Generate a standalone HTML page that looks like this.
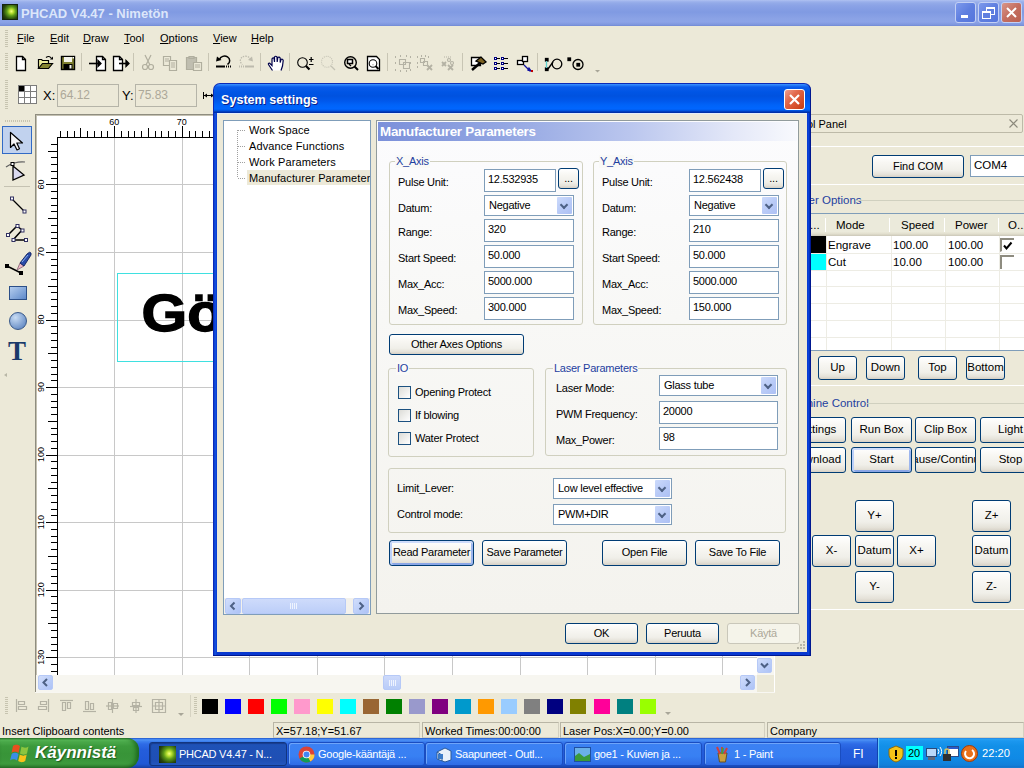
<!DOCTYPE html>
<html><head><meta charset="utf-8">
<style>
*{box-sizing:border-box;margin:0;padding:0}
html,body{width:1024px;height:768px;overflow:hidden;background:#ECE9D8;font-family:"Liberation Sans",sans-serif;font-size:11px;color:#000;position:relative}
.a{position:absolute}
svg{position:absolute;overflow:visible}
.t{position:absolute;white-space:nowrap;line-height:13px}
.tbtn{position:absolute;top:2px;width:21px;height:21px;border:1px solid #C3D0F4;border-radius:3px;background:linear-gradient(135deg,#7D99EC,#5F7FE0 50%,#5575DC)}
.tbtn.close{background:linear-gradient(135deg,#D9968A,#C46E60 50%,#BA6050)}
.btn{position:absolute;border:1px solid #003C74;border-radius:3px;background:linear-gradient(#FFFFFF 0,#F8F7F3 30%,#F0EFE9 70%,#E5E2D9 88%,#D6D0C5 100%);text-align:center;font-size:11px;white-space:nowrap;overflow:hidden}
.btn span{position:absolute;left:0;right:0;top:50%;margin-top:-7px;line-height:13px}
.btn.def{box-shadow:inset 0 2px 0 0 #CEDCFB,inset 2px 0 0 0 #BCD0F8,inset -2px 0 0 0 #9DB6EE,inset 0 -2px 0 0 #8AA6E6}
.btn.dis{border-color:#C9C7BA;color:#ACA899;background:#F5F4EA}
.inp{position:absolute;border:1px solid #7F9DB9;background:#fff;font-size:11px;line-height:13px;white-space:nowrap;overflow:hidden}
.inp span{position:absolute;left:3px;top:3px}
.grp{position:absolute;border:1px solid #D0D0BF;border-radius:3px}
.glab{position:absolute;padding:0 1px;color:#1F3F9F;line-height:13px;white-space:nowrap}
.combo{position:absolute;border:1px solid #7F9DB9;background:#fff;font-size:11px;line-height:13px;white-space:nowrap}
.combo span{position:absolute;left:4px;top:3px}
.dd{position:absolute;right:1px;top:1px;bottom:1px;width:15px;border-radius:1px;background:linear-gradient(135deg,#CCDAFB,#B9CBF7 50%,#ADC0F4)}
.dd:after{content:"";position:absolute;left:3.5px;top:4.5px;width:4px;height:4px;border-right:2.5px solid #4D6185;border-bottom:2.5px solid #4D6185;transform:rotate(45deg)}
.chk{position:absolute;width:13px;height:13px;border:1px solid #1C5180;background:linear-gradient(135deg,#DCDCD7,#FFFFFF)}
.grip{position:absolute;width:3px;background:repeating-linear-gradient(#C7C4B0 0 1px,transparent 1px 2px)}
.sep{position:absolute;width:1px;background:#C8C5B4}
.sw{position:absolute;top:699px;width:16px;height:15px}
.sb{position:absolute;border:1px solid #D3D0C0;border-top-color:#B8B5A5;border-left-color:#B8B5A5;height:16px;top:722px}
.sb span{position:absolute;left:2px;top:2px}
.tb{position:absolute;top:742px;height:24px;border-radius:3px;color:#fff;font-size:11px;background:linear-gradient(#3C81F3 0,#3880F3 60%,#2F6CE6 100%);border:1px solid #1A4DC0;box-shadow:inset 1px 1px 0 #6EA5FA}
.tb span{position:absolute;left:29px;top:5px;line-height:13px;letter-spacing:-0.25px}
.tb.act{background:linear-gradient(#1E52B7,#1F4FB4 80%,#2456BE);box-shadow:inset 1px 1px 1px #173C8E;border-color:#12357F}
</style></head><body>

<!-- main title bar -->
<div class="a" style="left:0;top:0;width:1024px;height:26px;background:linear-gradient(#B1C3F1 0,#A2B6EE 1px,#93AAE8 3px,#8AA2E6 6px,#809AE2 12px,#8BA3E6 19px,#8CA3E7 22px,#7D95DD 25px,#6F87D2 26px)"></div>
<div class="a" style="left:2px;top:4px;width:16px;height:16px;background:#14240C"><div class="a" style="left:1px;top:1px;width:14px;height:14px;background:radial-gradient(circle at 60% 45%,#F4FF80 0,#B8E030 18%,#5C9A18 40%,#28480C 70%,#142008 100%)"></div></div>
<div class="t" style="left:21px;top:6px;font-weight:bold;font-size:13px;line-height:15px;color:#DCE6FA">PHCAD V4.47 - Nimetön</div>
<div class="tbtn" style="left:955px"><div class="a" style="left:5px;top:12px;width:7px;height:3px;background:#fff"></div></div>
<div class="tbtn" style="left:978px"><div class="a" style="left:7px;top:4px;width:9px;height:8px;border:1px solid #fff;border-top-width:2px"></div><div class="a" style="left:3px;top:8px;width:9px;height:8px;border:1px solid #fff;border-top-width:2px;background:#5F7FE0"></div></div>
<div class="tbtn close" style="left:1001px"><svg width="21" height="21" style="left:-1px;top:-1px"><path d="M6 6L15 15M15 6L6 15" stroke="#fff" stroke-width="2"/></svg></div>

<!-- menu bar -->
<div class="grip" style="left:5px;top:30px;height:17px"></div>
<div class="t" style="left:17px;top:32px;font-size:11px"><u>F</u>ile</div>
<div class="t" style="left:50px;top:32px;font-size:11px"><u>E</u>dit</div>
<div class="t" style="left:83px;top:32px;font-size:11px"><u>D</u>raw</div>
<div class="t" style="left:124px;top:32px;font-size:11px"><u>T</u>ool</div>
<div class="t" style="left:160px;top:32px;font-size:11px"><u>O</u>ptions</div>
<div class="t" style="left:213px;top:32px;font-size:11px"><u>V</u>iew</div>
<div class="t" style="left:251px;top:32px;font-size:11px"><u>H</u>elp</div>


<!-- toolbar 1 -->
<div class="grip" style="left:5px;top:53px;height:18px"></div>
<svg width="600" height="20" style="left:0;top:53px">
 <g fill="none" stroke="#000" stroke-width="1.3">
  <!-- new -->
  <path d="M16.5 3.5h6l3 3v11h-9z" fill="#fff"/><path d="M22.5 3.5v3h3"/>
  <!-- open -->
  <path d="M38.5 15.5V6.5h3l1 1h6v3" fill="#EEEE9A" stroke="#000" stroke-width="1.2"/><path d="M38.5 15.5l4-5h10l-4 5z" fill="#858530" stroke="#000" stroke-width="1.2"/><path d="M46 4.5c2-1.5 4-1.5 5.5 1" stroke-width="1.2"/><path d="M50 6.5h3v-3z" fill="#000" stroke="none"/>
  <!-- save -->
  <rect x="61.5" y="3.5" width="13" height="13" fill="#7F8030" stroke-width="1.4"/><rect x="64" y="4" width="8" height="5" fill="#F4F4EC" stroke="none"/><rect x="63.5" y="11" width="9" height="5.5" fill="#000" stroke="none"/><rect x="69.5" y="12" width="2" height="3.5" fill="#F4F4EC" stroke="none"/><rect x="72.5" y="4" width="1.5" height="1.5" fill="#fff" stroke="none"/>
  <!-- import -->
  <path d="M96.5 3.5h6l3 3v11h-9z" fill="#fff"/><path d="M102.5 3.5v3h3"/><path d="M89 10.5h10" stroke-width="1.6"/><path d="M98 7.5l3 3-3 3z" fill="#000"/>
  <!-- export -->
  <path d="M113.5 3.5h6l3 3v11h-9z" fill="#fff"/><path d="M119.5 3.5v3h3"/><path d="M119 10.5h8" stroke-width="1.6"/><path d="M126 7.5l3 3-3 3z" fill="#000"/>
 </g>
 <g fill="none" stroke="#B0AE9E" stroke-width="1.2">
  <!-- scissors -->
  <path d="M145 2l5 10M151 2l-5 10"/><circle cx="145" cy="14" r="2.5"/><circle cx="151" cy="14" r="2.5"/>
  <!-- copy -->
  <path d="M163.5 3.5h7v9h-7z"/><path d="M169.5 7.5h7v10h-7z" fill="#ECE9D8"/><path d="M165 6h4M165 8h4M171 10h4M171 12h4M171 14h4"/>
  <!-- paste -->
  <path d="M186.5 4.5h10v12h-10z" fill="#C0BEB0"/><path d="M189 3.5h5v2h-5z" fill="#C0BEB0"/><path d="M193.5 9.5h8v8h-8z" fill="#ECE9D8"/><path d="M195 12h5M195 14h5"/>
 </g>
 <!-- undo -->
 <g fill="none" stroke="#000" stroke-width="1.5"><path d="M219.5 6.5A5.2 4.6 0 1 1 227.5 11.5"/></g>
 <path d="M216 8.5L217 3.5L221.5 7z" fill="#000"/><rect x="216" y="12.5" width="9" height="2" fill="#000"/><rect x="226" y="12.5" width="1" height="2" fill="#000"/><rect x="228" y="12.5" width="1" height="2" fill="#000"/><rect x="230" y="12.5" width="1" height="2" fill="#000"/>
 <!-- redo -->
 <g fill="none" stroke="#BDBBAE" stroke-width="1.2"><path d="M250.5 6.5A5.2 4.6 0 1 0 242.5 11.5" stroke-dasharray="1.5 1"/></g>
 <path d="M253 8.5L252 3.5L248 7z" fill="#BDBBAE"/><rect x="245" y="12.5" width="9" height="2" fill="#BDBBAE"/><rect x="239" y="12.5" width="1" height="2" fill="#BDBBAE"/><rect x="241" y="12.5" width="1" height="2" fill="#BDBBAE"/><rect x="243" y="12.5" width="1" height="2" fill="#BDBBAE"/>
 <!-- hand -->
 <path d="M272.5 17.5L268.5 11.5Q268 10 269.5 10L272 12.5L272 6Q272.5 4.5 274 5L274.5 9L274.5 4Q275.5 2.5 277 4L277.2 9L277.8 4.5Q279 3.5 280.2 5L280.2 9.5L281 6.5Q282.5 5.5 283.2 7.5L282.5 13L281 17.5" fill="#fff" stroke="#00004A" stroke-width="1.2"/>
 <!-- zoom +- -->
 <g fill="none" stroke="#000" stroke-width="1.1"><circle cx="302.5" cy="9.5" r="4.8"/><path d="M306 13l3.5 3.5" stroke-width="2.2"/><path d="M309 6.5h4.5M311.2 4v5M309 11.5h4.5" stroke-width="1.2"/></g>
 <g fill="none" stroke="#C4C2B4" stroke-width="1.1" stroke-dasharray="1 1"><circle cx="327" cy="8.8" r="5.5"/></g><path d="M331 13l4 4" stroke="#C4C2B4" stroke-width="1.3"/>
 <g fill="none" stroke="#000"><circle cx="350.5" cy="9.5" r="5.8" stroke-width="1.4"/><rect x="347.5" y="6.5" width="5" height="4" fill="#fff" stroke-width="1.5"/><path d="M349 11l2 2" stroke-width="1.2"/><path d="M354.5 13.5l3.5 3.5" stroke-width="2"/></g>
 <g fill="none" stroke="#000" stroke-width="1.3"><path d="M367.5 3.5h9l3 3v11h-12z" fill="#fff"/><circle cx="373" cy="10.5" r="3.8" stroke-width="1.1"/><path d="M375.5 13l3 3" stroke-width="2"/><path d="M372 11.5h2l-1 1z" fill="#808080" stroke="none"/></g>
 <!-- group gray -->
 <g fill="none" stroke="#B4B2A4" stroke-width="1.1"><path d="M399.5 6.5h6v5h-6zM403.5 9.5h6v6h-6z"/><path d="M395 4h1M400 3h1M406 3h1M410 4h1M395 10h1M410 10h1M395 17h1M400 18h1M406 18h1M410 17h1" stroke-width="2"/></g>
 <g fill="none" stroke="#B4B2A4" stroke-width="1.1"><path d="M420.5 5.5h4v4h-4zM423.5 8.5h4v4h-4z"/><path d="M417 4h1M421 3h1M425 3h1M428 4h1M417 10h1M417 14h1" stroke-width="2"/><path d="M427 12l5 5M432 12l-5 5" stroke-width="1.8"/></g>
 <g fill="none" stroke="#B4B2A4" stroke-width="1.1"><circle cx="449" cy="7" r="1.5"/><circle cx="452" cy="10" r="1.5"/><path d="M442 9l4 4M446 9l-4 4M448 12l5 5M453 12l-5 5" stroke-width="1.8"/><path d="M444 4h8" stroke-dasharray="1 1"/></g>
 <!-- hammer -->
 <g stroke="#000" stroke-width="1.3"><path d="M471.5 4.5h9v8h-9z" fill="#fff"/><path d="M476 8l5-4 5 5-3 2z" fill="#7A6020"/><path d="M480 10l-8 7" stroke-width="2.5"/></g>
 <!-- array -->
 <g fill="#fff" stroke="#000080" stroke-width="1"><rect x="494.5" y="4.5" width="2" height="2"/><rect x="501.5" y="4.5" width="2" height="2"/><rect x="494.5" y="9.5" width="2" height="2"/><rect x="501.5" y="9.5" width="2" height="2"/><rect x="494.5" y="14.5" width="2" height="2"/><rect x="501.5" y="14.5" width="2" height="2"/></g>
 <path d="M497 5.5h3M504 5.5h4M497 10.5h3M504 10.5h4M497 15.5h3M504 15.5h4" stroke="#000" stroke-width="1"/>
 <!-- move -->
 <g stroke="#000" stroke-width="1.3" fill="#fff"><rect x="517.5" y="7.5" width="6" height="4"/><rect x="522.5" y="3.5" width="5" height="5"/><path d="M524 12l6 6" stroke="#1010A0" fill="none"/><path d="M529 15l2 3-3-1z" fill="#1010A0" stroke="#1010A0"/></g>
 <rect x="531" y="17" width="2" height="2" fill="#C00000"/>
 <!-- line circle -->
 <g fill="none" stroke="#000" stroke-width="1.3"><rect x="545.5" y="5.5" width="2.5" height="2.5" fill="#000"/><rect x="545.5" y="15" width="2.5" height="2.5" fill="#000"/><path d="M546.5 8v7" stroke="#60D0D0"/><circle cx="557" cy="11" r="4.8"/><path d="M548 16l5-7"/></g>
 <g fill="none" stroke="#000" stroke-width="1.3"><rect x="568" y="5" width="2.5" height="2.5" fill="#000"/><circle cx="578" cy="11.5" r="5"/><rect x="577" y="10.5" width="2.5" height="2.5" fill="#000"/></g>
 <path d="M595 17h5l-2.5 2.5z" fill="#A8A698"/>
</svg>
<div class="sep" style="left:81px;top:53px;height:18px"></div>
<div class="sep" style="left:133px;top:53px;height:18px"></div>
<div class="sep" style="left:208px;top:53px;height:18px"></div>
<div class="sep" style="left:260px;top:53px;height:18px"></div>
<div class="sep" style="left:289px;top:53px;height:18px"></div>
<div class="sep" style="left:387px;top:53px;height:18px"></div>
<div class="sep" style="left:462px;top:53px;height:18px"></div>
<div class="sep" style="left:537px;top:53px;height:18px"></div>

<!-- toolbar 2 -->
<div class="grip" style="left:5px;top:80px;height:30px"></div>
<svg width="20" height="20" style="left:18px;top:85px"><rect x="0.5" y="0.5" width="18" height="18" fill="#fff" stroke="#7C7C7C"/><path d="M6.5 0v19M12.5 0v19M0 6.5h19M0 12.5h19" stroke="#7C7C7C"/><rect x="1" y="1" width="5" height="5" fill="#000"/></svg>
<div class="t" style="left:43px;top:89px;font-size:13px;line-height:13px">X:</div>
<div class="inp" style="left:57px;top:84px;width:62px;height:23px;background:#ECE9D8;border-color:#B5B4A8"><span style="color:#ACA899;font-size:12px;left:2px;top:4px;line-height:13px">64.12</span></div>
<div class="t" style="left:122px;top:89px;font-size:13px;line-height:13px">Y:</div>
<div class="inp" style="left:135px;top:84px;width:62px;height:23px;background:#ECE9D8;border-color:#B5B4A8"><span style="color:#ACA899;font-size:12px;left:2px;top:4px;line-height:13px">75.83</span></div>
<svg width="12" height="8" style="left:203px;top:92px"><path d="M0.5 0v7M11.5 0v7M1 3.5h10" stroke="#000"/><path d="M1 3.5l3-2v4zM11 3.5l-3-2v4z" fill="#000"/></svg>

<!-- left toolbox -->
<div class="a" style="left:5px;top:120px;width:25px;height:2px;background:repeating-linear-gradient(90deg,#C7C4B0 0 1px,transparent 1px 2px)"></div>
<div class="a" style="left:2px;top:126px;width:30px;height:28px;background:#C1D2EE;border:1px solid #316AC5"></div>
<svg width="34" height="260" style="left:0;top:115px">
 <!-- arrow -->
 <path d="M10.5 17.5V32.5L14 29L17 35L19.5 33.8L16.8 28H22.5z" fill="#F4F4F4" stroke="#000" stroke-width="1.2" stroke-linejoin="round"/>
 <!-- node edit -->
 <path d="M13 51l11 9-11 5z" fill="#DADAF0" stroke="#000" stroke-width="1.3"/><path d="M6 52c4-3 12-6 19-5" fill="none" stroke="#606060" stroke-width="1.2"/><rect x="11" y="47.5" width="3" height="3" fill="#fff" stroke="#000"/>
 <!-- sep -->
 <rect x="4" y="71" width="26" height="1" fill="#C5C2B2"/>
 <!-- line -->
 <path d="M12 84l12 12" stroke="#000" stroke-width="1.2"/><rect x="10.5" y="82" width="3" height="3" fill="#fff" stroke="#303060"/><rect x="23" y="95" width="3" height="3" fill="#fff" stroke="#303060"/>
 <!-- polyline -->
 <path d="M8 120l9-9 5 4-9 10h13" fill="none" stroke="#000" stroke-width="1.5"/><rect x="6.5" y="118.5" width="3" height="3" fill="#fff" stroke="#303060"/><rect x="16" y="109.5" width="3" height="3" fill="#fff" stroke="#303060"/><rect x="21" y="114" width="3" height="3" fill="#fff" stroke="#303060"/><rect x="12" y="123.5" width="3" height="3" fill="#fff" stroke="#303060"/><rect x="24.5" y="123.5" width="3" height="3" fill="#fff" stroke="#303060"/>
 <!-- pen -->
 <path d="M7 151L21 158" stroke="#000" stroke-width="1.5"/><rect x="5" y="149" width="4" height="4" fill="#000"/><rect x="19" y="156" width="4" height="4" fill="#000"/>
 <path d="M17 155L20 148L24 151z" fill="#F0B8C8" stroke="#806070" stroke-width="0.8"/><path d="M20 148L27 139Q30 136 31 138L31 140L24 151z" fill="#2A4CA8" stroke="#102060" stroke-width="0.9"/><path d="M22 147L28 140" stroke="#8AB0F0" stroke-width="1"/>
 <!-- rect -->
 <rect x="9.5" y="171.5" width="17" height="13" fill="#7DA2D8" stroke="#2C4F88"/>
 <!-- circle -->
 <defs><radialGradient id="cg" cx="0.35" cy="0.3" r="0.8"><stop offset="0" stop-color="#C8DCF4"/><stop offset="1" stop-color="#5C84C0"/></radialGradient><linearGradient id="rg" x1="0" y1="0" x2="1" y2="1"><stop offset="0" stop-color="#B8D0F0"/><stop offset="1" stop-color="#5A86C8"/></linearGradient></defs>
 <rect x="9.5" y="171.5" width="17" height="13" fill="url(#rg)" stroke="#2C4F88"/>
 <circle cx="18" cy="206" r="8.5" fill="url(#cg)" stroke="#3A5A8A"/>
 <!-- T -->
 <text x="8" y="245" font-family="Liberation Serif" font-weight="bold" font-size="27" fill="#1A3A6A">T</text>
 <path d="M4 260l3-2v4z" fill="#B8B6A6"/>
</svg>

<!-- canvas -->
<div class="a" style="left:35px;top:114px;width:740px;height:579px;background:#fff;border-top:1px solid #8F8D80;border-left:1px solid #8F8D80;box-shadow:inset 1px 1px 0 #C4C1B2"></div>
<svg width="1024" height="768" style="left:0;top:0"><path d="M114.5 138V675 M182.5 138V675 M249.5 138V675 M317.5 138V675 M384.5 138V675 M452.5 138V675 M520.5 138V675 M587.5 138V675 M655.5 138V675 M722.5 138V675 M58 184.5H757 M58 252.5H757 M58 320.5H757 M58 387.5H757 M58 455.5H757 M58 522.5H757 M58 590.5H757 M58 657.5H757" stroke="#C8C8C8" stroke-width="1" fill="none"/><path d="M57 137.5H757 M57.5 137V675 M60.5 131V137 M67.5 131V137 M74.5 131V137 M80.5 128V137 M87.5 131V137 M94.5 131V137 M101.5 131V137 M107.5 131V137 M114.5 126V137 M121.5 131V137 M128.5 131V137 M134.5 131V137 M141.5 131V137 M148.5 128V137 M155.5 131V137 M161.5 131V137 M168.5 131V137 M175.5 131V137 M182.5 126V137 M189.5 131V137 M195.5 131V137 M202.5 131V137 M209.5 131V137 M216.5 128V137 M222.5 131V137 M229.5 131V137 M236.5 131V137 M243.5 131V137 M249.5 126V137 M256.5 131V137 M263.5 131V137 M270.5 131V137 M276.5 131V137 M283.5 128V137 M290.5 131V137 M297.5 131V137 M303.5 131V137 M310.5 131V137 M317.5 126V137 M324.5 131V137 M330.5 131V137 M337.5 131V137 M344.5 131V137 M351.5 128V137 M357.5 131V137 M364.5 131V137 M371.5 131V137 M378.5 131V137 M384.5 126V137 M391.5 131V137 M398.5 131V137 M405.5 131V137 M411.5 131V137 M418.5 128V137 M425.5 131V137 M432.5 131V137 M438.5 131V137 M445.5 131V137 M452.5 126V137 M459.5 131V137 M465.5 131V137 M472.5 131V137 M479.5 131V137 M486.5 128V137 M492.5 131V137 M499.5 131V137 M506.5 131V137 M513.5 131V137 M520.5 126V137 M526.5 131V137 M533.5 131V137 M540.5 131V137 M547.5 131V137 M553.5 128V137 M560.5 131V137 M567.5 131V137 M574.5 131V137 M580.5 131V137 M587.5 126V137 M594.5 131V137 M601.5 131V137 M607.5 131V137 M614.5 131V137 M621.5 128V137 M628.5 131V137 M634.5 131V137 M641.5 131V137 M648.5 131V137 M655.5 126V137 M661.5 131V137 M668.5 131V137 M675.5 131V137 M682.5 131V137 M688.5 128V137 M695.5 131V137 M702.5 131V137 M709.5 131V137 M715.5 131V137 M722.5 126V137 M729.5 131V137 M736.5 131V137 M742.5 131V137 M749.5 131V137 M756.5 128V137 M51 144.5H57 M48 151.5H57 M51 157.5H57 M51 164.5H57 M51 171.5H57 M51 178.5H57 M46 184.5H57 M51 191.5H57 M51 198.5H57 M51 205.5H57 M51 211.5H57 M48 218.5H57 M51 225.5H57 M51 232.5H57 M51 238.5H57 M51 245.5H57 M46 252.5H57 M51 259.5H57 M51 265.5H57 M51 272.5H57 M51 279.5H57 M48 286.5H57 M51 292.5H57 M51 299.5H57 M51 306.5H57 M51 313.5H57 M46 320.5H57 M51 326.5H57 M51 333.5H57 M51 340.5H57 M51 347.5H57 M48 353.5H57 M51 360.5H57 M51 367.5H57 M51 374.5H57 M51 380.5H57 M46 387.5H57 M51 394.5H57 M51 401.5H57 M51 407.5H57 M51 414.5H57 M48 421.5H57 M51 428.5H57 M51 434.5H57 M51 441.5H57 M51 448.5H57 M46 455.5H57 M51 461.5H57 M51 468.5H57 M51 475.5H57 M51 482.5H57 M48 488.5H57 M51 495.5H57 M51 502.5H57 M51 509.5H57 M51 515.5H57 M46 522.5H57 M51 529.5H57 M51 536.5H57 M51 542.5H57 M51 549.5H57 M48 556.5H57 M51 563.5H57 M51 569.5H57 M51 576.5H57 M51 583.5H57 M46 590.5H57 M51 596.5H57 M51 603.5H57 M51 610.5H57 M51 617.5H57 M48 623.5H57 M51 630.5H57 M51 637.5H57 M51 644.5H57 M51 650.5H57 M46 657.5H57 M51 664.5H57 M51 671.5H57" stroke="#000" stroke-width="1" fill="none"/><g font-family="Liberation Sans" font-size="9" fill="#000"><text x="114.2" y="124.5" text-anchor="middle">60</text><text x="181.8" y="124.5" text-anchor="middle">70</text><text x="249.3" y="124.5" text-anchor="middle">80</text><text x="316.8" y="124.5" text-anchor="middle">90</text><text x="384.4" y="124.5" text-anchor="middle">100</text><text x="451.9" y="124.5" text-anchor="middle">110</text><text x="519.5" y="124.5" text-anchor="middle">120</text><text x="587.0" y="124.5" text-anchor="middle">130</text><text x="654.6" y="124.5" text-anchor="middle">140</text><text x="722.1" y="124.5" text-anchor="middle">150</text><text transform="translate(43.5,184.4) rotate(-90)" text-anchor="middle">60</text><text transform="translate(43.5,251.9) rotate(-90)" text-anchor="middle">70</text><text transform="translate(43.5,319.5) rotate(-90)" text-anchor="middle">80</text><text transform="translate(43.5,387.0) rotate(-90)" text-anchor="middle">90</text><text transform="translate(43.5,454.6) rotate(-90)" text-anchor="middle">100</text><text transform="translate(43.5,522.1) rotate(-90)" text-anchor="middle">110</text><text transform="translate(43.5,589.7) rotate(-90)" text-anchor="middle">120</text><text transform="translate(43.5,657.2) rotate(-90)" text-anchor="middle">130</text></g><rect x="117.5" y="273.5" width="640" height="88" fill="none" stroke="#3FE0E0" stroke-width="1"/><text transform="translate(141.5,330.5) scale(1.12,1)" font-family="Liberation Sans" font-weight="bold" font-size="52.5" fill="#000" stroke="#000" stroke-width="1.3">Gö</text></svg>
<div class="a" style="left:757px;top:116px;width:17px;height:559px;background:#F7F6F0"></div>
<div class="a" style="left:757px;top:658px;width:15px;height:15px;border-radius:2px;border:1px solid #B6C9F7;background:linear-gradient(135deg,#D2DEFB,#BACDF8 60%,#AEC3F6)"><svg width="13" height="13" style="left:0;top:0"><path d="M3 4.5l3.5 3.5 3.5-3.5" stroke="#4D6185" stroke-width="2" fill="none"/></svg></div>
<div class="a" style="left:36px;top:675px;width:721px;height:17px;background:#F7F6F0"></div>
<div class="a" style="left:38px;top:675px;width:15px;height:15px;border-radius:2px;border:1px solid #B6C9F7;background:linear-gradient(135deg,#D2DEFB,#BACDF8 60%,#AEC3F6)"><svg width="13" height="13" style="left:0;top:0"><path d="M8 3l-3.5 3.5 3.5 3.5" stroke="#4D6185" stroke-width="2" fill="none"/></svg></div>
<div class="a" style="left:383px;top:675px;width:18px;height:15px;border-radius:2px;border:1px solid #B6C9F7;background:linear-gradient(#CDDAFB,#B9CCF8)"><svg width="16" height="13" style="left:0;top:0"><path d="M5.5 4v6M7.5 4v6M9.5 4v6M11.5 4v6" stroke="#EEF3FE" stroke-width="1"/></svg></div>
<div class="a" style="left:740px;top:675px;width:15px;height:15px;border-radius:2px;border:1px solid #B6C9F7;background:linear-gradient(135deg,#D2DEFB,#BACDF8 60%,#AEC3F6)"><svg width="13" height="13" style="left:0;top:0"><path d="M5 3l3.5 3.5-3.5 3.5" stroke="#4D6185" stroke-width="2" fill="none"/></svg></div>
<div class="a" style="left:757px;top:675px;width:17px;height:17px;background:#ECE9D8"></div>

<!-- panel -->
<div class="a" style="left:780px;top:114px;width:243px;height:19px;border:1px solid #BDBAA8;border-radius:2px;background:#ECE9D8"></div>
<div class="t" style="left:780px;top:118px;font-size:11px">Control Panel</div>
<svg width="12" height="12" style="left:1008px;top:118px"><path d="M1.5 1.5l8 8M9.5 1.5l-8 8" stroke="#8C8A7C" stroke-width="1.1"/></svg>
<div class="a" style="left:780px;top:146px;width:244px;height:1px;background:#D6D3C2;border-bottom:1px solid #fff"></div>
<div class="btn" style="left:872px;top:155px;width:92px;height:23px"><span style="font-size:11px">Find COM</span></div>
<div class="inp" style="left:970px;top:155px;width:60px;height:22px"><span style="font-size:11.5px;top:3px">COM4</span></div>
<div class="a" style="left:780px;top:184px;width:244px;height:1px;background:#D6D3C2;border-bottom:1px solid #fff"></div>
<div class="glab" style="left:789px;top:194px;font-size:11.5px;background:#ECE9D8">Layer Options</div>
<div class="a" style="left:856px;top:200px;width:168px;height:1px;background:#D0D0BF"></div>
<div class="a" style="left:811px;top:213px;width:213px;height:138px;background:#fff;border-top:1px solid #7F9DB9;border-bottom:1px solid #7F9DB9"></div>
<div class="a" style="left:811px;top:214px;width:213px;height:22px;background:linear-gradient(#EBEADB 0,#EBEADB 80%,#E2DFCE 90%,#CBC7B8 100%)"></div>
<div class="a" style="left:825px;top:218px;width:1px;height:14px;background:#C7C5B2;border-right:1px solid #fff"></div>
<div class="a" style="left:889px;top:218px;width:1px;height:14px;background:#C7C5B2;border-right:1px solid #fff"></div>
<div class="a" style="left:944px;top:218px;width:1px;height:14px;background:#C7C5B2;border-right:1px solid #fff"></div>
<div class="a" style="left:998px;top:218px;width:1px;height:14px;background:#C7C5B2;border-right:1px solid #fff"></div>
<div class="t" style="left:810px;top:219px;font-size:11.5px">...</div>
<div class="t" style="left:836px;top:219px;font-size:11.5px">Mode</div>
<div class="t" style="left:901px;top:219px;font-size:11.5px">Speed</div>
<div class="t" style="left:955px;top:219px;font-size:11.5px">Power</div>
<div class="t" style="left:1008px;top:219px;font-size:11.5px">O...</div>
<div class="a" style="left:811px;top:253px;width:213px;height:1px;background:#EDECE4"></div>
<div class="a" style="left:811px;top:270px;width:213px;height:1px;background:#EDECE4"></div>
<div class="a" style="left:811px;top:286px;width:213px;height:1px;background:#EDECE4"></div>
<div class="a" style="left:811px;top:303px;width:213px;height:1px;background:#EDECE4"></div>
<div class="a" style="left:811px;top:320px;width:213px;height:1px;background:#EDECE4"></div>
<div class="a" style="left:811px;top:337px;width:213px;height:1px;background:#EDECE4"></div>
<div class="a" style="left:826px;top:236px;width:1px;height:114px;background:#EDECE4"></div>
<div class="a" style="left:891px;top:236px;width:1px;height:114px;background:#EDECE4"></div>
<div class="a" style="left:945px;top:236px;width:1px;height:114px;background:#EDECE4"></div>
<div class="a" style="left:999px;top:236px;width:1px;height:114px;background:#EDECE4"></div>
<div class="a" style="left:811px;top:236px;width:15px;height:17px;background:#000"></div>
<div class="a" style="left:811px;top:254px;width:15px;height:16px;background:#00FFFF"></div>
<div class="t" style="left:828px;top:239px;font-size:11.5px">Engrave</div>
<div class="t" style="left:893px;top:239px;font-size:11.5px">100.00</div>
<div class="t" style="left:948px;top:239px;font-size:11.5px">100.00</div>
<div class="t" style="left:828px;top:256px;font-size:11.5px">Cut</div>
<div class="t" style="left:893px;top:256px;font-size:11.5px">10.00</div>
<div class="t" style="left:948px;top:256px;font-size:11.5px">100.00</div>
<div class="a" style="left:1000px;top:238px;width:14px;height:14px;border-top:2px solid #8E8C80;border-left:2px solid #8E8C80;border-bottom:1px solid #fff"><svg width="12" height="12" style="left:0;top:0"><path d="M2 5.5l2.5 3 5-6" stroke="#000" stroke-width="2" fill="none"/></svg></div>
<div class="a" style="left:1000px;top:255px;width:14px;height:14px;border-top:2px solid #8E8C80;border-left:2px solid #8E8C80"></div>
<div class="btn" style="left:818px;top:356px;width:39px;height:24px"><span style="font-size:11.5px">Up</span></div>
<div class="btn" style="left:866px;top:356px;width:39px;height:24px"><span style="font-size:11.5px">Down</span></div>
<div class="btn" style="left:918px;top:356px;width:39px;height:24px"><span style="font-size:11.5px">Top</span></div>
<div class="btn" style="left:966px;top:356px;width:39px;height:24px"><span style="font-size:11.5px">Bottom</span></div>
<div class="a" style="left:811px;top:385px;width:213px;height:1px;background:#D6D3C2;border-bottom:1px solid #fff"></div>
<div class="glab" style="left:784px;top:397px;font-size:11.5px;background:#ECE9D8">Machine Control</div>
<div class="a" style="left:867px;top:403px;width:157px;height:1px;background:#D0D0BF"></div>
<div class="btn " style="left:785px;top:417px;width:61px;height:26px"><span style="font-size:11.5px;left:-20px;right:-20px">Settings</span></div>
<div class="btn " style="left:851px;top:417px;width:61px;height:26px"><span style="font-size:11.5px">Run Box</span></div>
<div class="btn " style="left:915px;top:417px;width:61px;height:26px"><span style="font-size:11.5px">Clip Box</span></div>
<div class="btn " style="left:980px;top:417px;width:61px;height:26px"><span style="font-size:11.5px">Light</span></div>
<div class="btn " style="left:785px;top:447px;width:61px;height:26px"><span style="font-size:11.5px;left:-20px;right:-20px">Download</span></div>
<div class="btn def" style="left:851px;top:447px;width:61px;height:26px"><span style="font-size:11.5px">Start</span></div>
<div class="btn " style="left:915px;top:447px;width:61px;height:26px"><span style="font-size:11.5px;left:-20px;right:-20px">Pause/Continue</span></div>
<div class="btn " style="left:980px;top:447px;width:61px;height:26px"><span style="font-size:11.5px">Stop</span></div>
<div class="btn" style="left:855px;top:500px;width:39px;height:32px"><span style="font-size:11.5px">Y+</span></div>
<div class="btn" style="left:812px;top:535px;width:39px;height:32px"><span style="font-size:11.5px">X-</span></div>
<div class="btn" style="left:855px;top:535px;width:39px;height:32px"><span style="font-size:11.5px">Datum</span></div>
<div class="btn" style="left:897px;top:535px;width:39px;height:32px"><span style="font-size:11.5px">X+</span></div>
<div class="btn" style="left:855px;top:571px;width:39px;height:32px"><span style="font-size:11.5px">Y-</span></div>
<div class="btn" style="left:972px;top:500px;width:39px;height:32px"><span style="font-size:11.5px">Z+</span></div>
<div class="btn" style="left:972px;top:535px;width:39px;height:32px"><span style="font-size:11.5px">Datum</span></div>
<div class="btn" style="left:972px;top:571px;width:39px;height:32px"><span style="font-size:11.5px">Z-</span></div>
<div class="a" style="left:811px;top:609px;width:213px;height:1px;background:#D6D3C2;border-bottom:1px solid #fff"></div>

<!-- bottom -->
<div class="a" style="left:35px;top:692px;width:740px;height:1px;background:#F8F7F2"></div>
<div class="grip" style="left:5px;top:697px;height:18px"></div>
<svg width="200" height="20" style="left:0;top:697px"><g fill="none" stroke="#B4B2A4" stroke-width="1.2">
<path d="M16.5 2v13"/><path d="M18.5 4.5h6v3h-6zM18.5 9.5h8v3h-8z"/>
<path d="M48.5 2v13"/><path d="M40.5 4.5h6v3h-6zM38.5 9.5h8v3h-8z"/>
<path d="M60 3.5h13"/><path d="M62.5 5.5h3v8h-3zM67.5 5.5h3v6h-3z"/>
<path d="M83 14.5h13"/><path d="M85.5 4.5h3v8h-3zM90.5 6.5h3v6h-3z"/>
<path d="M112.5 2v14"/><path d="M108.5 5.5h3v7h-3zM113.5 6.5h4v5h-4z"/><path d="M106 9h13"/>
<path d="M130 9.5h12"/><path d="M132.5 5.5h7v3h-7zM133.5 10.5h5v3h-5z"/><path d="M136 2v14"/>
<path d="M152.5 2.5h13v13h-13z"/><path d="M159 2v14M152 9h14"/><path d="M155.5 5.5h7v7h-7z"/>
</g><path d="M178 16h6l-3 3z" fill="#A8A698"/></svg>
<div class="a" style="left:190px;top:695px;width:1px;height:22px;background:#D6D3C2"></div>
<div class="grip" style="left:194px;top:697px;height:18px"></div>
<div class="sw" style="left:202px;background:#000000"></div>
<div class="sw" style="left:225px;background:#0000FF"></div>
<div class="sw" style="left:248px;background:#FF0000"></div>
<div class="sw" style="left:271px;background:#00FF00"></div>
<div class="sw" style="left:294px;background:#FF99CC"></div>
<div class="sw" style="left:317px;background:#FFFF00"></div>
<div class="sw" style="left:340px;background:#00FFFF"></div>
<div class="sw" style="left:363px;background:#996633"></div>
<div class="sw" style="left:386px;background:#008000"></div>
<div class="sw" style="left:409px;background:#9999CC"></div>
<div class="sw" style="left:432px;background:#800080"></div>
<div class="sw" style="left:455px;background:#0099CC"></div>
<div class="sw" style="left:478px;background:#FF9900"></div>
<div class="sw" style="left:501px;background:#99CCFF"></div>
<div class="sw" style="left:524px;background:#808080"></div>
<div class="sw" style="left:547px;background:#000080"></div>
<div class="sw" style="left:570px;background:#808000"></div>
<div class="sw" style="left:594px;background:#FF0099"></div>
<div class="sw" style="left:617px;background:#008080"></div>
<div class="sw" style="left:640px;background:#99FF00"></div>
<svg width="8" height="6" style="left:665px;top:712px"><path d="M0 0h6l-3 3z" fill="#A8A698"/></svg>
<div class="t" style="left:2px;top:725px">Insert Clipboard contents</div>
<div class="sb" style="left:273px;width:147px"><span>X=57.18;Y=51.67</span></div>
<div class="sb" style="left:422px;width:137px"><span>Worked Times:00:00:00</span></div>
<div class="sb" style="left:560px;width:205px"><span>Laser Pos:X=0.00;Y=0.00</span></div>
<div class="sb" style="left:767px;width:257px"><span>Company</span></div>

<!-- taskbar -->
<div class="a" style="left:0;top:738px;width:1024px;height:30px;background:linear-gradient(#1F4CB7 0,#3A80F3 1px,#4F92F5 2px,#3F83F0 3px,#2E6BE6 6px,#245DDB 12px,#225AD9 20px,#2058D4 26px,#1A46B0 29px,#163E9E 30px)"></div>
<div class="a" style="left:0;top:738px;width:139px;height:30px;border-radius:0 12px 12px 0;background:linear-gradient(#2F7A2F 0,#5BBE5B 2px,#4AAA4A 4px,#3C9A3C 8px,#389438 16px,#3A963A 22px,#3E9C3E 26px,#2E7A2E 30px);box-shadow:inset -3px 0 4px rgba(0,60,0,.5)"></div>
<svg width="20" height="20" style="left:11px;top:743px"><path d="M2 3c3-2 5-1 7 0l-1.5 7c-2-1-4-2-7 0z" fill="#E8501E"/><path d="M10.5 3.5c2 1 4 2 7 0l-1.5 7c-3 2-5 1-7 0z" fill="#8BC53F"/><path d="M0.7 11c3-2 5-1 6.8 0l-1.5 6.5c-2-1-4-2-7 0z" fill="#3A8EE6"/><path d="M8.8 11.5c2 1 4 2 6.9 0l-1.5 6.5c-3 2-5 1-7 0z" fill="#F8C21A"/></svg>
<div class="t" style="left:35px;top:743px;font-size:17px;line-height:20px;font-weight:bold;font-style:italic;color:#fff;text-shadow:1px 1px 1px #1C5A1C">Käynnistä</div>
<div class="tb act" style="left:149px;width:138px"><span style="font-size:11px">PHCAD V4.47 - N...</span></div>
<div class="a" style="left:159px;top:746px;width:17px;height:17px;background:radial-gradient(circle at 60% 45%,#F4FF80 0,#B8E030 18%,#5C9A18 40%,#28480C 70%,#142008 100%)"></div>
<div class="tb " style="left:288px;width:137px"><span style="font-size:11px">Google-kääntäjä ...</span></div>
<svg width="17" height="17" style="left:298px;top:746px"><circle cx="8.5" cy="8.5" r="8" fill="#DB4437"/><path d="M8.5 8.5L1.6 12.5A8 8 0 0 0 12.5 15.4z" fill="#0F9D58"/><path d="M8.5 8.5L12.5 15.4A8 8 0 0 0 16.5 8.5z" fill="#FFCD40"/><circle cx="8.5" cy="8.5" r="3.8" fill="#fff"/><circle cx="8.5" cy="8.5" r="3" fill="#4285F4"/></svg>
<div class="tb " style="left:425px;width:138px"><span style="font-size:11px">Saapuneet - Outl...</span></div>
<svg width="17" height="17" style="left:435px;top:746px"><path d="M2 6l8-4 6 3v9l-6 2-8-3z" fill="#E8F0FA" stroke="#2A5A9A"/><path d="M2 6l5 3v6" fill="none" stroke="#2A5A9A"/><rect x="3" y="8" width="5" height="5" fill="#3A7AC8"/></svg>
<div class="tb " style="left:564px;width:138px"><span style="font-size:11px">goe1 - Kuvien ja ...</span></div>
<svg width="17" height="17" style="left:574px;top:746px"><rect x="0.5" y="1.5" width="16" height="14" fill="#6AB0E8" stroke="#2050A0"/><path d="M1 10l4-3 5 4 6-3v7H1z" fill="#3A9A3A"/></svg>
<div class="tb " style="left:704px;width:137px"><span style="font-size:11px">1 - Paint</span></div>
<svg width="17" height="17" style="left:714px;top:746px"><path d="M4 7h9l-1.5 9h-6z" fill="#C8A040" stroke="#6A5020"/><path d="M6 8l-3-7M8 8l0-7M10 8l3-6" stroke="#D04040" stroke-width="2"/><path d="M8 8l1-6" stroke="#40A040" stroke-width="2"/></svg>
<div class="t" style="left:853px;top:748px;color:#fff;font-size:12px">FI</div>
<div class="a" style="left:877px;top:738px;width:147px;height:30px;border-left:1px solid #1042AF;background:linear-gradient(#1A6AD8 0,#24A2F4 1px,#1B97EF 3px,#1290E8 8px,#0F8AE6 20px,#1280DA 27px,#0F6DC6 30px);box-shadow:inset 1px 0 1px #6ACBFA"></div>
<svg width="16" height="18" style="left:888px;top:745px"><path d="M8 1l7 3v5c0 4-3 7-7 8-4-1-7-4-7-8V4z" fill="#F5C518" stroke="#8A6A10"/><path d="M8 5v6" stroke="#000" stroke-width="2"/><rect x="7" y="12" width="2" height="2" fill="#000"/></svg>
<div class="a" style="left:906px;top:746px;width:17px;height:14px;background:#00FFFF"></div>
<div class="t" style="left:908px;top:747px;font-size:11px">20</div>
<svg width="18" height="17" style="left:925px;top:745px"><rect x="1.5" y="3.5" width="10" height="8" fill="#B8D8F8" stroke="#2A4A7A"/><rect x="3" y="12" width="7" height="3" fill="#606878"/><path d="M13 4a4 4 0 0 1 0 5M15 2a7 7 0 0 1 0 9" stroke="#fff" fill="none"/></svg>
<svg width="18" height="18" style="left:942px;top:745px"><rect x="5.5" y="1.5" width="11" height="10" fill="#fff" stroke="#2A4A8A"/><rect x="6" y="2" width="10" height="2" fill="#2A5ACA"/><rect x="1" y="9" width="8" height="7" fill="#303030"/><path d="M3 9V6a2 2 0 0 1 4 0v3" stroke="#D8C060" fill="none" stroke-width="1.5"/></svg>
<svg width="17" height="17" style="left:961px;top:745px"><circle cx="8.5" cy="8.5" r="8" fill="#E8701A" stroke="#A03A08"/><path d="M5 6a4.5 4.5 0 1 0 6 -1" stroke="#fff" stroke-width="2" fill="none"/></svg>
<div class="t" style="left:982px;top:747px;color:#fff;font-size:11.2px">22:20</div>

<!-- dialog -->
<div class="a" style="left:213px;top:83px;width:598px;height:573px;border-radius:7px 7px 0 0;background:#0A2AB8;box-shadow:inset -1px -1px 0 #001890"></div>
<div class="a" style="left:214px;top:84px;width:596px;height:571px;border-radius:6px 6px 0 0;background:linear-gradient(90deg,#0A32C8 0,#1456E0 1px,#0838D0 3px,#0838D0 calc(100% - 3px),#0A46DC calc(100% - 1px),#0020A0 100%)"></div>
<div class="a" style="left:214px;top:84px;width:596px;height:29px;border-radius:6px 6px 0 0;background:linear-gradient(#3D95FF 0,#2A80FA 1px,#0B5CEA 3px,#0055E5 8px,#0052DF 12px,#0058EC 17px,#0063F8 21px,#0066FF 25px,#0050D8 27px,#0030A8 28px)"></div>
<div class="a" style="left:217px;top:113px;width:590px;height:539px;background:#ECE9D8;border-top:1px solid #E4EEFB"></div>
<div class="t" style="left:221px;top:93px;font-weight:bold;font-size:12.6px;line-height:15px;color:#fff;text-shadow:1px 1px 0 #0A1E8A">System settings</div>
<div class="a" style="left:784px;top:89px;width:21px;height:21px;border:1px solid #fff;border-radius:3px;background:linear-gradient(135deg,#F0A090 0,#E26B4E 35%,#D9522E 65%,#C43C10 100%)"><svg width="19" height="19" style="left:0;top:0"><path d="M5 5l9 9M14 5l-9 9" stroke="#fff" stroke-width="2.2"/></svg></div>
<svg width="12" height="12" style="left:795px;top:640px"><g fill="#B9B7A8"><rect x="8" y="1" width="2" height="2"/><rect x="5" y="4" width="2" height="2"/><rect x="8" y="4" width="2" height="2"/><rect x="2" y="7" width="2" height="2"/><rect x="5" y="7" width="2" height="2"/><rect x="8" y="7" width="2" height="2"/></g></svg>
<div style="letter-spacing:-0.25px">
<div class="a" style="left:223px;top:120px;width:148px;height:495px;background:#fff;border:1px solid #7F9DB9"></div>
<svg width="20" height="60" style="left:230px;top:125px"><path d="M7.5 5V53M8 5.5h8M8 21.5h8M8 37.5h8M8 53.5h8" stroke="#A0A0A0" stroke-dasharray="1 1" fill="none"/></svg>
<div class="a" style="left:224px;top:121px;width:146px;height:477px;overflow:hidden">
<div class="a" style="left:23px;top:49px;width:130px;height:15px;background:#ECE9D8"></div>
<div class="t" style="left:25px;top:3px;letter-spacing:0.1px">Work Space</div>
<div class="t" style="left:25px;top:19px;letter-spacing:0.1px">Advance Functions</div>
<div class="t" style="left:25px;top:35px;letter-spacing:0.1px">Work Parameters</div>
<div class="t" style="left:25px;top:51px;letter-spacing:0.1px">Manufacturer Parameters</div>
</div>
<div class="a" style="left:370px;top:120px;width:1px;height:1px"></div>
<div class="a" style="left:224px;top:598px;width:146px;height:16px;background:#F3F1EC"></div>
<div class="a" style="left:225px;top:598px;width:16px;height:16px;border-radius:2px;border:1px solid #B6C9F7;background:linear-gradient(135deg,#D2DEFB,#BACDF8 60%,#AEC3F6)"><svg width="14" height="14" style="left:0;top:0"><path d="M8.5 3.5l-3.5 3.5 3.5 3.5" stroke="#4D6185" stroke-width="2" fill="none"/></svg></div>
<div class="a" style="left:242px;top:598px;width:104px;height:16px;border-radius:2px;border:1px solid #B6C9F7;background:linear-gradient(#CEDBFB,#BCCEF8)"><svg width="102" height="14" style="left:0;top:0"><path d="M47.5 4v6M49.5 4v6M51.5 4v6M53.5 4v6" stroke="#EEF3FE"/></svg></div>
<div class="a" style="left:353px;top:598px;width:16px;height:16px;border-radius:2px;border:1px solid #B6C9F7;background:linear-gradient(135deg,#D2DEFB,#BACDF8 60%,#AEC3F6)"><svg width="14" height="14" style="left:0;top:0"><path d="M5.5 3.5l3.5 3.5-3.5 3.5" stroke="#4D6185" stroke-width="2" fill="none"/></svg></div>
<div class="a" style="left:376px;top:120px;width:423px;height:494px;border:1px solid #919B9C;background:linear-gradient(#FCFCFE 0,#F8F8F6 40%,#F4F3EE 100%)"></div>
<div class="a" style="left:378px;top:122px;width:419px;height:19px;background:linear-gradient(90deg,#7B90DA 0,#93A6E2 30%,#BAC6EE 60%,#E4E8F8 85%,#F8F9FD 100%)"></div>
<div class="t" style="left:380px;top:124px;font-weight:bold;font-size:13.4px;line-height:15px;color:#fff">Manufacturer Parameters</div>
<div class="grp" style="left:389px;top:161px;width:194px;height:164px"></div>
<div class="glab" style="left:395px;top:155px;background:#F9F9F7">X_Axis</div>
<div class="grp" style="left:593px;top:161px;width:194px;height:164px"></div>
<div class="glab" style="left:599px;top:155px;background:#F9F9F7">Y_Axis</div>
<div class="t" style="left:398px;top:176px;">Pulse Unit:</div>
<div class="t" style="left:398px;top:202px;">Datum:</div>
<div class="t" style="left:398px;top:226px;">Range:</div>
<div class="t" style="left:398px;top:252px;">Start Speed:</div>
<div class="t" style="left:398px;top:278px;">Max_Acc:</div>
<div class="t" style="left:398px;top:304px;">Max_Speed:</div>
<div class="inp" style="left:484px;top:169px;width:72px;height:23px"><span>12.532935</span></div>
<div class="btn " style="left:558px;top:168px;width:21px;height:21px"><span>...</span></div>
<div class="combo" style="left:484px;top:195px;width:90px;height:21px"><span>Negative</span><div class="dd"></div></div>
<div class="inp" style="left:484px;top:219px;width:90px;height:23px"><span>320</span></div>
<div class="inp" style="left:484px;top:245px;width:90px;height:23px"><span>50.000</span></div>
<div class="inp" style="left:484px;top:271px;width:90px;height:23px"><span>5000.000</span></div>
<div class="inp" style="left:484px;top:297px;width:90px;height:23px"><span>300.000</span></div>
<div class="t" style="left:602px;top:176px;">Pulse Unit:</div>
<div class="t" style="left:602px;top:202px;">Datum:</div>
<div class="t" style="left:602px;top:226px;">Range:</div>
<div class="t" style="left:602px;top:252px;">Start Speed:</div>
<div class="t" style="left:602px;top:278px;">Max_Acc:</div>
<div class="t" style="left:602px;top:304px;">Max_Speed:</div>
<div class="inp" style="left:689px;top:169px;width:72px;height:23px"><span>12.562438</span></div>
<div class="btn " style="left:763px;top:168px;width:21px;height:21px"><span>...</span></div>
<div class="combo" style="left:689px;top:195px;width:90px;height:21px"><span>Negative</span><div class="dd"></div></div>
<div class="inp" style="left:689px;top:219px;width:90px;height:23px"><span>210</span></div>
<div class="inp" style="left:689px;top:245px;width:90px;height:23px"><span>50.000</span></div>
<div class="inp" style="left:689px;top:271px;width:90px;height:23px"><span>5000.000</span></div>
<div class="inp" style="left:689px;top:297px;width:90px;height:23px"><span>150.000</span></div>
<div class="btn " style="left:389px;top:334px;width:135px;height:21px"><span>Other Axes Options</span></div>
<div class="grp" style="left:388px;top:368px;width:146px;height:89px"></div>
<div class="glab" style="left:396px;top:362px;background:#F9F9F7">IO</div>
<div class="chk" style="left:398px;top:386px"></div>
<div class="t" style="left:415px;top:386px;">Opening Protect</div>
<div class="chk" style="left:398px;top:409px"></div>
<div class="t" style="left:415px;top:409px;">If blowing</div>
<div class="chk" style="left:398px;top:432px"></div>
<div class="t" style="left:415px;top:432px;">Water Protect</div>
<div class="grp" style="left:545px;top:368px;width:242px;height:88px"></div>
<div class="glab" style="left:553px;top:362px;background:#F9F9F7">Laser Parameters</div>
<div class="t" style="left:556px;top:382px;">Laser Mode:</div>
<div class="combo" style="left:659px;top:375px;width:119px;height:21px"><span>Glass tube</span><div class="dd"></div></div>
<div class="t" style="left:556px;top:408px;">PWM Frequency:</div>
<div class="inp" style="left:659px;top:401px;width:119px;height:23px"><span>20000</span></div>
<div class="t" style="left:556px;top:434px;">Max_Power:</div>
<div class="inp" style="left:659px;top:427px;width:119px;height:23px"><span>98</span></div>
<div class="grp" style="left:388px;top:468px;width:398px;height:65px"></div>
<div class="t" style="left:397px;top:482px;">Limit_Lever:</div>
<div class="combo" style="left:553px;top:478px;width:119px;height:21px"><span>Low level effective</span><div class="dd"></div></div>
<div class="t" style="left:397px;top:508px;">Control mode:</div>
<div class="combo" style="left:553px;top:504px;width:119px;height:21px"><span>PWM+DIR</span><div class="dd"></div></div>
<div class="btn def" style="left:389px;top:540px;width:85px;height:26px"><span>Read Parameter</span></div>
<div class="btn " style="left:482px;top:540px;width:85px;height:26px"><span>Save Parameter</span></div>
<div class="btn " style="left:602px;top:540px;width:85px;height:26px"><span>Open File</span></div>
<div class="btn " style="left:695px;top:540px;width:85px;height:26px"><span>Save To File</span></div>
<div class="btn " style="left:565px;top:623px;width:73px;height:21px"><span>OK</span></div>
<div class="btn " style="left:646px;top:623px;width:73px;height:21px"><span>Peruuta</span></div>
<div class="btn dis" style="left:727px;top:623px;width:73px;height:21px"><span>Käytä</span></div>
</div>
</body></html>
